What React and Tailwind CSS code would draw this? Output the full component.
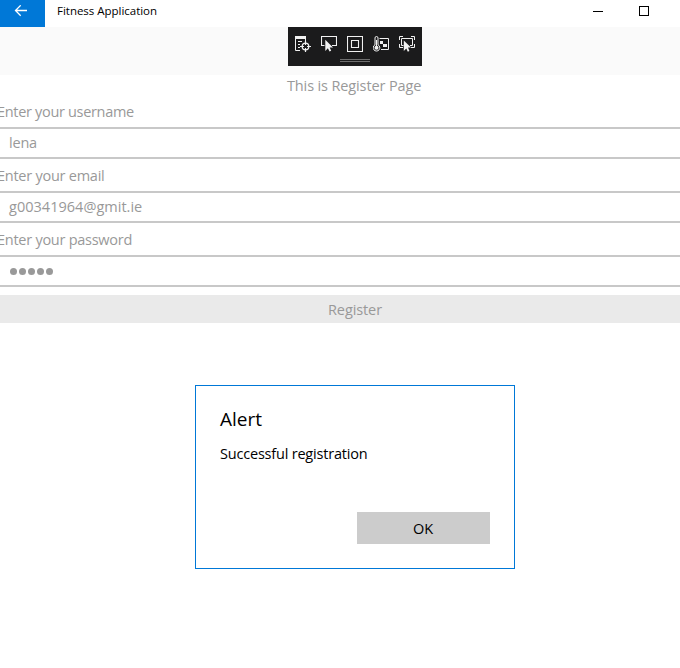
const fields = [
  { label: "Enter your username", value: "lena", track: "tracking-[-0.32px]", valueTrack: "tracking-[-0.2px]" },
  { label: "Enter your email", value: "g00341964@gmit.ie", track: "tracking-[-0.25px]", valueTrack: "tracking-[0.02px]" },
  { label: "Enter your password", value: "secret", password: true, track: "tracking-[-0.26px]", valueTrack: "" },
];

function BackArrow() {
  return (
    <svg width="14" height="12" viewBox="0 0 14 12" fill="none" stroke="white" strokeWidth="1.3">
      <path d="M1.2 5.5H13M6.7 0.3L1.5 5.5L6.7 10.7" />
    </svg>
  );
}

function Icon({ children }) {
  return (
    <svg className="h-4 w-4 shrink-0" viewBox="0 0 16 16" fill="none" stroke="#f1f1f1" strokeWidth="1">
      {children}
    </svg>
  );
}

function DebugToolbar() {
  return (
    <div className="flex h-[39px] w-[134px] flex-col items-center bg-[#1b1b1c]">
      <div className="mt-[9px] flex gap-[10px]">
        <Icon>
          <path d="M0 1.5H11" strokeWidth="3" />
          <path d="M0.5 1V14.5H5M10.5 1V5M3 5.5H7M3 8.5H5M3 11.5H5" />
          <circle cx="10.5" cy="10.5" r="3.3" strokeWidth="1.3" />
          <path d="M10.5 5V9M10.5 12V16M5 10.5H9M12 10.5H16" strokeWidth="1.2" />
        </Icon>
        <Icon>
          <path d="M3.5 9.5H0.5V0.5H15.5V9.5H11" strokeWidth="1.1" />
          <path d="M4.3 3.7V15L6.9 12.2L8.5 15.5L10.2 14.7L8.7 11.4H12Z" fill="#f1f1f1" stroke="none" />
        </Icon>
        <Icon>
          <path d="M0.5 0.5H15.5V15.5H0.5ZM4.5 4.5H11.5V11.5H4.5Z" strokeWidth="1.1" />
        </Icon>
        <Icon>
          <path d="M2 8.8V2A1.5 1.5 0 0 1 5 2V8.8A3.3 3.3 0 1 1 2 8.8Z" />
          <circle cx="3.5" cy="11.7" r="2" fill="#f1f1f1" stroke="none" />
          <path d="M3.5 4V11" strokeWidth="1.2" />
          <path d="M6.5 2.5H15.5V13.5H8" />
          <path d="M7 5H10V8H7ZM10 8H14V11H10Z" fill="#f1f1f1" stroke="none" />
        </Icon>
        <Icon>
          <path d="M0.5 4V0.5H4M12 0.5H15.5V4M0.5 8V11.5H4M12 11.5H15.5V8" />
          <path d="M4.5 9.5H2.5V2.5H13.5V9.5H11" />
          <path d="M4.8 4.5V15L7.3 12.4L8.8 15.7L10.4 14.9L9 11.6H12Z" fill="#f1f1f1" stroke="none" />
        </Icon>
      </div>
      <div className="mt-[7px] h-[3px] w-[30px] border-y border-[#6e6e6e]" />
    </div>
  );
}

function Dialog() {
  return (
    <div className="flex h-[184px] w-80 flex-col border border-[#0078d7] bg-white px-6 text-black">
      <h1 className="mt-[20px] text-[19px] leading-[26px] tracking-[0px]">Alert</h1>
      <p className="mt-3 text-[14.5px] leading-5 tracking-[-0.2px]">Successful registration</p>
      <button className="mt-12 h-8 w-[133px] self-end bg-[#cccccc] pr-px text-[14.5px] leading-[33px] tracking-[0px]">OK</button>
    </div>
  );
}

export default function App() {
  return (
    <div className="flex h-[668px] w-[680px] flex-col overflow-hidden bg-white font-['Open_Sans','Noto_Sans',sans-serif] text-[14.5px] text-[#999999]">
      <header className="flex h-[27px] shrink-0 text-black">
        <button className="flex w-[45px] items-start justify-center bg-[#0078d7] pr-[3px] pt-[5px]">
          <BackArrow />
        </button>
        <span className="ml-3 text-[11.5px] leading-[22px] tracking-[-0.02px]">Fitness Application</span>
        <div className="ml-auto mr-[31px] flex gap-9 pt-[6px]">
          <span className="mt-[5px] h-px w-[10px] bg-black" />
          <span className="h-[10px] w-[10px] border border-black" />
        </div>
      </header>
      <div className="flex h-12 shrink-0 justify-center bg-[#fafafa] pl-[30px]">
        <DebugToolbar />
      </div>
      <main className="flex shrink-0 flex-col">
        <h2 className="h-5 pl-[287px] leading-[21px] tracking-[-0.13px]">This is Register Page</h2>
        {fields.map((f) => (
          <label key={f.label} className="flex h-16 flex-col pt-[6px]">
            <span className={"-ml-[3px] h-[26px] leading-[22px] " + f.track}>{f.label}</span>
            <span className={"flex h-8 items-center border-y-2 border-[#c8c8c8] pl-[9px] leading-7 " + f.valueTrack}>
              {f.password ? (
                <span className="ml-px flex gap-[2.1px] pt-px">
                  {[0, 1, 2, 3, 4].map((i) => (
                    <span key={i} className="h-[7px] w-[7px] rounded-full bg-[#999999]" />
                  ))}
                </span>
              ) : (
                f.value
              )}
            </span>
          </label>
        ))}
        <button className="mt-2 h-7 bg-[#eaeaea] pl-[30px] leading-[30px] tracking-[-0.1px]">Register</button>
      </main>
      <div className="mt-[62px] pl-[195px]">
        <Dialog />
      </div>
    </div>
  );
}
